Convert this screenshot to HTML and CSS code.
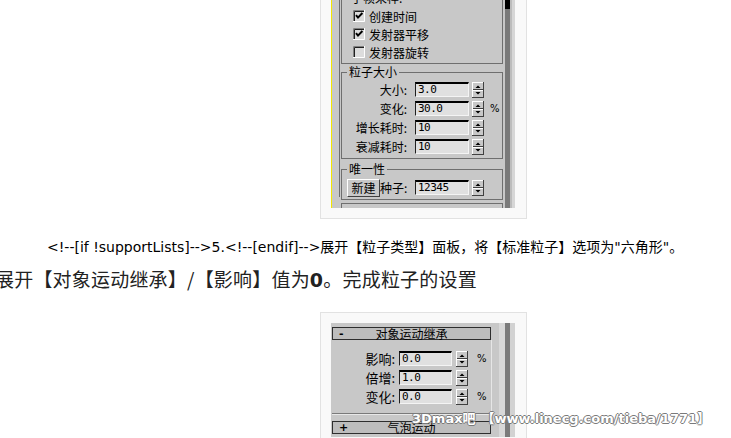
FILE: index.html
```html
<html>

<head>
    <title>粒子设置</title>
    <link rel="stylesheet" href="styles.css">
</head>

<body>

    <div class="shot shot-cut">
        <div class="panel panel-a">
            <div class="rollout">
                <div class="roll-body">
                    <div class="group g1">
                        <div class="subhead">子帧采样:</div>
                        <div class="check-row">
                            <svg class="check" width="12" height="12" viewBox="0 0 12 12">
                                <rect width="12" height="12" fill="#dcdcdc"/>
                                <path d="M0.5 12V0.5H12" stroke="#808080" fill="none"/>
                                <path d="M1.5 11V1.5H11" stroke="#202020" fill="none"/>
                                <path d="M0 11.5H11.5V0" stroke="#fff" fill="none"/>
                                <path d="M3 5.2l2 2.4L9.4 3" stroke="#000" stroke-width="2" fill="none"/>
                            </svg>
                            <span>创建时间</span>
                        </div>
                        <div class="check-row">
                            <svg class="check" width="12" height="12" viewBox="0 0 12 12">
                                <rect width="12" height="12" fill="#dcdcdc"/>
                                <path d="M0.5 12V0.5H12" stroke="#808080" fill="none"/>
                                <path d="M1.5 11V1.5H11" stroke="#202020" fill="none"/>
                                <path d="M0 11.5H11.5V0" stroke="#fff" fill="none"/>
                                <path d="M3 5.2l2 2.4L9.4 3" stroke="#000" stroke-width="2" fill="none"/>
                            </svg>
                            <span>发射器平移</span>
                        </div>
                        <div class="check-row">
                            <svg class="check" width="12" height="12" viewBox="0 0 12 12">
                                <rect width="12" height="12" fill="#dcdcdc"/>
                                <path d="M0.5 12V0.5H12" stroke="#808080" fill="none"/>
                                <path d="M1.5 11V1.5H11" stroke="#202020" fill="none"/>
                                <path d="M0 11.5H11.5V0" stroke="#fff" fill="none"/>
                            </svg>
                            <span>发射器旋转</span>
                        </div>
                    </div>

                    <fieldset class="group g2">
                        <legend>粒子大小</legend>
                        <div class="spin-row">
                            <span class="lbl">大小:</span>
                            <span class="field">3.0</span>
                            <svg class="spin" width="12" height="16" viewBox="0 0 12 16">
                                <rect width="12" height="16" fill="#c8c8c8"/>
                                <path d="M0 0.5H11.5M0.5 0V16M1 8.5H11" stroke="#fff" fill="none"/>
                                <path d="M0 15.5H12M11.5 0V16M1 7.5H11" stroke="#404040" fill="none"/>
                                <path d="M3.5 6H8.5L6 3.5Z M3.5 10H8.5L6 12.5Z" fill="#000"/>
                            </svg>
                        </div>
                        <div class="spin-row">
                            <span class="lbl">变化:</span>
                            <span class="field">30.0</span>
                            <svg class="spin" width="12" height="16" viewBox="0 0 12 16">
                                <rect width="12" height="16" fill="#c8c8c8"/>
                                <path d="M0 0.5H11.5M0.5 0V16M1 8.5H11" stroke="#fff" fill="none"/>
                                <path d="M0 15.5H12M11.5 0V16M1 7.5H11" stroke="#404040" fill="none"/>
                                <path d="M3.5 6H8.5L6 3.5Z M3.5 10H8.5L6 12.5Z" fill="#000"/>
                            </svg>
                            <span class="pct">%</span>
                        </div>
                        <div class="spin-row">
                            <span class="lbl">增长耗时:</span>
                            <span class="field">10</span>
                            <svg class="spin" width="12" height="16" viewBox="0 0 12 16">
                                <rect width="12" height="16" fill="#c8c8c8"/>
                                <path d="M0 0.5H11.5M0.5 0V16M1 8.5H11" stroke="#fff" fill="none"/>
                                <path d="M0 15.5H12M11.5 0V16M1 7.5H11" stroke="#404040" fill="none"/>
                                <path d="M3.5 6H8.5L6 3.5Z M3.5 10H8.5L6 12.5Z" fill="#000"/>
                            </svg>
                        </div>
                        <div class="spin-row">
                            <span class="lbl">衰减耗时:</span>
                            <span class="field">10</span>
                            <svg class="spin" width="12" height="16" viewBox="0 0 12 16">
                                <rect width="12" height="16" fill="#c8c8c8"/>
                                <path d="M0 0.5H11.5M0.5 0V16M1 8.5H11" stroke="#fff" fill="none"/>
                                <path d="M0 15.5H12M11.5 0V16M1 7.5H11" stroke="#404040" fill="none"/>
                                <path d="M3.5 6H8.5L6 3.5Z M3.5 10H8.5L6 12.5Z" fill="#000"/>
                            </svg>
                        </div>
                    </fieldset>

                    <fieldset class="group g3">
                        <legend>唯一性</legend>
                        <div class="spin-row">
                            <span class="btn">新建</span>
                            <span class="lbl lbl-short">种子:</span>
                            <span class="field">12345</span>
                            <svg class="spin" width="12" height="16" viewBox="0 0 12 16">
                                <rect width="12" height="16" fill="#c8c8c8"/>
                                <path d="M0 0.5H11.5M0.5 0V16M1 8.5H11" stroke="#fff" fill="none"/>
                                <path d="M0 15.5H12M11.5 0V16M1 7.5H11" stroke="#404040" fill="none"/>
                                <path d="M3.5 6H8.5L6 3.5Z M3.5 10H8.5L6 12.5Z" fill="#000"/>
                            </svg>
                        </div>
                    </fieldset>

                    <div class="group g4"></div>
                </div>
            </div>
            <div class="scroll"><div class="thumb"></div></div>
        </div>
    </div>

    <p class="note">&lt;!--[if !supportLists]--&gt;5.&lt;!--[endif]--&gt;展开【粒子类型】面板，将【标准粒子】选项为"六角形"。</p>
    <p class="step">展开【对象运动继承】/【影响】值为<b>0</b>。完成粒子的设置</p>

    <div class="shot shot-open">
        <div class="panel panel-b">
            <div class="roll-b">
                <div class="rhead"><span class="sign">-</span><span class="rtitle">对象运动继承</span></div>
                <div class="rbody">
                    <div class="spin-row">
                        <span class="lbl">影响:</span>
                        <span class="field">0.0</span>
                        <svg class="spin" width="12" height="16" viewBox="0 0 12 16">
                            <rect width="12" height="16" fill="#c8c8c8"/>
                            <path d="M0 0.5H11.5M0.5 0V16M1 8.5H11" stroke="#fff" fill="none"/>
                            <path d="M0 15.5H12M11.5 0V16M1 7.5H11" stroke="#404040" fill="none"/>
                            <path d="M3.5 6H8.5L6 3.5Z M3.5 10H8.5L6 12.5Z" fill="#000"/>
                        </svg>
                        <span class="pct">%</span>
                    </div>
                    <div class="spin-row">
                        <span class="lbl">倍增:</span>
                        <span class="field">1.0</span>
                        <svg class="spin" width="12" height="16" viewBox="0 0 12 16">
                            <rect width="12" height="16" fill="#c8c8c8"/>
                            <path d="M0 0.5H11.5M0.5 0V16M1 8.5H11" stroke="#fff" fill="none"/>
                            <path d="M0 15.5H12M11.5 0V16M1 7.5H11" stroke="#404040" fill="none"/>
                            <path d="M3.5 6H8.5L6 3.5Z M3.5 10H8.5L6 12.5Z" fill="#000"/>
                        </svg>
                    </div>
                    <div class="spin-row">
                        <span class="lbl">变化:</span>
                        <span class="field">0.0</span>
                        <svg class="spin" width="12" height="16" viewBox="0 0 12 16">
                            <rect width="12" height="16" fill="#c8c8c8"/>
                            <path d="M0 0.5H11.5M0.5 0V16M1 8.5H11" stroke="#fff" fill="none"/>
                            <path d="M0 15.5H12M11.5 0V16M1 7.5H11" stroke="#404040" fill="none"/>
                            <path d="M3.5 6H8.5L6 3.5Z M3.5 10H8.5L6 12.5Z" fill="#000"/>
                        </svg>
                        <span class="pct">%</span>
                    </div>
                </div>
                <div class="rhead"><span class="sign">+</span><span class="rtitle">气泡运动</span></div>
            </div>
            <div class="strip"></div>
        </div>
        <div class="watermark"><span>3Dmax吧</span><span class="wm-url">【www.linecg.com/tieba/1771】</span></div>
    </div>

</body>

</html>
```

FILE: styles.css
```css
html,
body {
    margin: 0;
    overflow: hidden;
}

body {
    width: 731px;
    height: 438px;
    background-color: #fff;
    font-family: "DejaVu Sans", "Noto Sans CJK SC", sans-serif;
}

/* picture frames */
.shot {
    width: 184px;
    margin-left: 320px;
    padding: 0 11px 10px 10px;
    background-color: #f9f9f9;
    border: 1px solid #e2e2e2;
    border-top: none;
}

.shot-open {
    position: relative;
    margin-top: 19px;
    padding-top: 10px;
    border-top: 1px solid #e2e2e2;
}

/* 3ds max panel */
.panel {
    display: flex;
    background-color: #c8c8c8;
    overflow: hidden;
    font-family: "Noto Sans CJK SC", sans-serif;
    font-size: 12px;
    color: #000;
}

.panel-a {
    width: 183px;
    height: 208px;
    border-left: 1px solid #f2e600;
}

.rollout {
    width: 164px;
    padding-left: 7px;
}

.roll-body {
    height: 100%;
    border-left: 1px solid #6f6f6f;
    padding-left: 1px;
}

.scroll {
    width: 12px;
    background: linear-gradient(to right, #c8c8c8 0 2px, #7a7a7a 2px 7px, #bcbcbc 7px 9px, #d6d6d6 9px);
}

.thumb {
    width: 5px;
    height: 9px;
    margin-left: 2px;
    background-color: #000;
}

.group {
    width: 162px;
    box-sizing: border-box;
    margin: 0;
    padding: 0;
    min-width: 0;
    border: 1px solid #6f6f6f;
}

.group legend {
    margin-left: 5px;
    padding: 0 2px;
    font-size: 12px;
    line-height: 14px;
}

.g1 {
    border-top: none;
    padding-bottom: 2px;
}

.subhead {
    height: 18px;
    line-height: 18px;
    margin-top: -11px;
    padding-left: 9px;
}

.check-row {
    display: flex;
    align-items: center;
    gap: 4px;
    height: 18px;
    padding-left: 11px;
}

.g2 {
    margin-top: 1px;
    padding: 1px 0 2px;
}

.g3 {
    margin-top: 3px;
    padding: 2px 0 2px;
}

.g4 {
    height: 20px;
    margin-top: 3px;
    border-bottom: none;
}

.spin-row {
    display: flex;
    align-items: center;
    height: 19px;
}

.lbl {
    width: 73px;
    box-sizing: border-box;
    padding-right: 8px;
    text-align: right;
    white-space: nowrap;
}

.lbl-short {
    width: 35px;
}

.field {
    width: 54px;
    height: 15px;
    box-sizing: border-box;
    padding-left: 2px;
    background-color: #e0e0e0;
    border-top: 2px solid #000;
    border-left: 1px solid #202020;
    border-right: 1px solid #f4f4f4;
    border-bottom: 1px solid #f4f4f4;
    font-family: "DejaVu Sans Mono", monospace;
    font-size: 11px;
    line-height: 12px;
    letter-spacing: -0.5px;
}

.spin {
    flex: none;
    margin-left: 3px;
}

.pct {
    margin-left: 6px;
    font-family: "DejaVu Sans", sans-serif;
    font-size: 10px;
}

.btn {
    display: flex;
    align-items: center;
    justify-content: center;
    width: 33px;
    height: 18px;
    box-sizing: border-box;
    margin-left: 5px;
    border: 1px solid;
    border-color: #fff #404040 #404040 #fff;
}

/* second panel */
.panel-b {
    width: 184px;
    height: 114px;
}

.roll-b {
    width: 160px;
    padding: 4px 0 0 1px;
}

.rhead {
    display: flex;
    align-items: center;
    width: 159px;
    height: 13px;
    box-sizing: border-box;
    border: 1px solid #2e2e2e;
    background-color: #bdbdbd;
    line-height: 11px;
}

.sign {
    width: 8px;
    padding-left: 6px;
    font-family: "DejaVu Sans", sans-serif;
    font-size: 11px;
    font-weight: bold;
}

.rtitle {
    flex: 1;
    margin-right: 14px;
    text-align: center;
}

.rbody {
    width: 160px;
    height: 74px;
    box-sizing: border-box;
    margin-bottom: 7px;
    padding-top: 9px;
    border-right: 1px solid #e6e6e6;
    border-bottom: 1px solid #7a7a7a;
    box-shadow: 0 1px 0 #e8e8e8;
}

.rbody .lbl {
    width: 67px;
    padding-right: 4px;
    font-size: 13px;
}

.rbody .field {
    width: 53px;
}

.rbody .spin {
    margin-left: 4px;
}

.rbody .pct {
    margin-left: 9px;
}

.strip {
    flex: 1;
    background: linear-gradient(to right, #c8c8c8 0 7px, #d8d8d8 7px 13px, #7b7b7b 13px 18px, #d2d2d2 18px);
}

.watermark {
    position: absolute;
    left: 91px;
    top: 98px;
    display: flex;
    white-space: nowrap;
    color: #fff;
    font-family: "DejaVu Sans", "Noto Sans CJK SC", sans-serif;
    font-size: 13px;
    font-weight: bold;
    line-height: 15px;
    text-shadow: 1px 0 #7a7a7a, -1px 0 #7a7a7a, 0 1px #7a7a7a, 0 -1px #7a7a7a;
}

.wm-url {
    margin-left: 6px;
}

/* article text */
.note {
    margin: 18px 0 0 47px;
    font-size: 14px;
    line-height: 20px;
    color: #000;
    white-space: nowrap;
}

.step {
    margin: 9px 0 0 -5px;
    font-family: "Noto Sans CJK SC", sans-serif;
    font-size: 19px;
    line-height: 26px;
    letter-spacing: 0.2px;
    color: #222;
    white-space: nowrap;
}

.step b {
    font-family: "DejaVu Sans", sans-serif;
}
```
